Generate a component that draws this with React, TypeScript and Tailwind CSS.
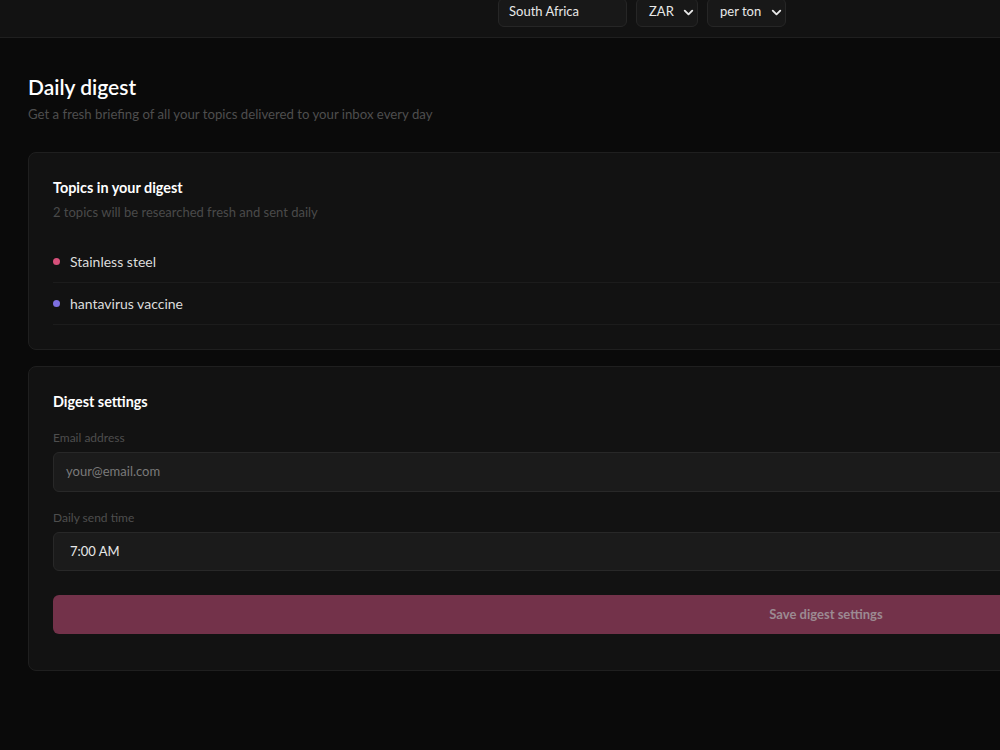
import React from 'react';
import { ChevronDown } from 'lucide-react';

const topics = [
  { name: 'Stainless steel', dot: 'bg-[#d6507a]' },
  { name: 'hantavirus vaccine', dot: 'bg-[#7d6fe0]' },
];

const App: React.FC = () => {
  return (
    <div className="min-h-screen w-[1652px] bg-[#0a0a0a] overflow-hidden" style={{ fontFamily: 'Lato, "Noto Sans", sans-serif' }}>
      {/* Top bar (scrolled partly out of view) */}
      <header className="h-[56px] -mt-[18px] bg-[#121212] border-b border-[#1f1f1f] flex items-center px-7">
        <div className="ml-[470px] flex items-center gap-[9px] pt-[5px]">
          <div className="w-[129px] h-[29px] flex items-center pl-[10px] bg-[#181818] border border-[#262626] rounded-md text-[13px] text-[#e8e8e8]">
            South Africa
          </div>
          <div className="w-[62px] h-[29px] flex items-center justify-between pl-[12px] pr-[1px] bg-[#181818] border border-[#262626] rounded-md text-[13px] text-[#e8e8e8]">
            <span>ZAR</span>
            <ChevronDown className="w-[15px] h-[15px]" strokeWidth={3} />
          </div>
          <div className="w-[79px] h-[29px] flex items-center justify-between pl-[12px] pr-[1px] bg-[#181818] border border-[#262626] rounded-md text-[13px] text-[#e8e8e8]">
            <span>per ton</span>
            <ChevronDown className="w-[15px] h-[15px]" strokeWidth={3} />
          </div>
        </div>
      </header>

      <main className="px-7 pt-[35px] pb-20">
        <h1 className="text-[21px] leading-[28px] font-semibold text-white">Daily digest</h1>
        <p className="mt-[3px] text-[13.2px] leading-[20px] text-[#4e4e4e]">
          Get a fresh briefing of all your topics delivered to your inbox every day
        </p>

        {/* Topics card */}
        <section className="mt-[28px] bg-[#121212] border border-[#1f1f1f] rounded-lg px-6 pt-[25px] pb-6">
          <h2 className="text-[14.4px] leading-[20px] font-bold text-white">Topics in your digest</h2>
          <p className="mt-[4px] text-[13px] leading-[20px] text-[#4a4a4a]">2 topics will be researched fresh and sent daily</p>
          <ul className="mt-[19px]">
            {topics.map((t) => (
              <li key={t.name} className="h-[42px] flex items-center gap-[10px] border-b border-[#1c1c1c]">
                <span className={`w-[7px] h-[7px] rounded-full ${t.dot}`} />
                <span className="text-[14px] text-[#dcdcdc]">{t.name}</span>
              </li>
            ))}
          </ul>
        </section>

        {/* Settings card */}
        <section className="mt-4 bg-[#121212] border border-[#1f1f1f] rounded-lg px-6 pt-[25px] pb-9">
          <h2 className="text-[14.4px] leading-[20px] font-bold text-white">Digest settings</h2>
          <label className="block mt-[18px] text-[12px] leading-[16px] text-[#4e4e4e]">Email address</label>
          <div className="mt-[6px] h-[40px] flex items-center px-3 bg-[#1b1b1b] border border-[#282828] rounded-md text-[13px] text-[#7a7a7a]">
            your@email.com
          </div>
          <label className="block mt-[18px] text-[12px] leading-[16px] text-[#4e4e4e]">Daily send time</label>
          <div className="mt-[6px] h-[39px] flex items-center px-4 bg-[#1b1b1b] border border-[#282828] rounded-md text-[13px] text-[#e8e8e8]">
            7:00 AM
          </div>
          <button className="mt-[24px] w-full h-[39px] rounded-md bg-[#73324a] text-[13px] font-bold text-[#9c8a92]">
            Save digest settings
          </button>
        </section>
      </main>
    </div>
  );
};

export default App;
